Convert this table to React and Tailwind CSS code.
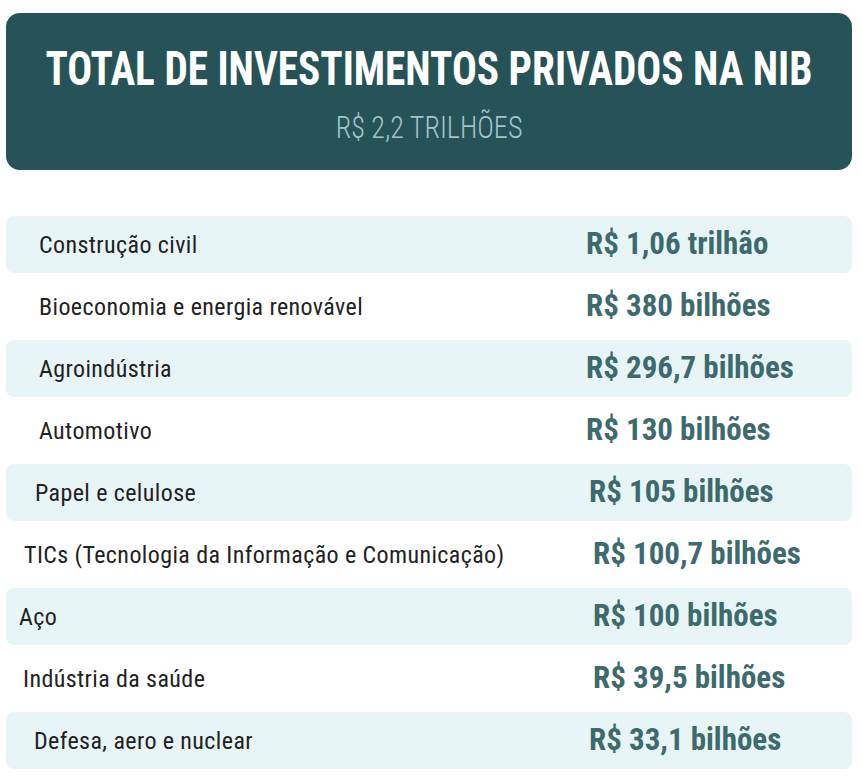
export default function App() {
  const rows = [
    { label: "Construção civil", value: "R$ 1,06 trilhão", pl: "pl-[33px]", vl: "pl-[0px]", shade: true },
    { label: "Bioeconomia e energia renovável", value: "R$ 380 bilhões", pl: "pl-[33px]", vl: "pl-[0px]" },
    { label: "Agroindústria", value: "R$ 296,7 bilhões", pl: "pl-[33px]", vl: "pl-[0px]", shade: true },
    { label: "Automotivo", value: "R$ 130 bilhões", pl: "pl-[33px]", vl: "pl-[0px]" },
    { label: "Papel e celulose", value: "R$ 105 bilhões", pl: "pl-[29px]", vl: "pl-[3px]", shade: true },
    { label: "TICs (Tecnologia da Informação e Comunicação)", value: "R$ 100,7 bilhões", pl: "pl-[18px]", vl: "pl-[7px]" },
    { label: "Aço", value: "R$ 100 bilhões", pl: "pl-[13px]", vl: "pl-[7px]", shade: true },
    { label: "Indústria da saúde", value: "R$ 39,5 bilhões", pl: "pl-[17px]", vl: "pl-[7px]" },
    { label: "Defesa, aero e nuclear", value: "R$ 33,1 bilhões", pl: "pl-[28px]", vl: "pl-[3px]", shade: true },
  ];

  const font = { fontFamily: '"Roboto Condensed", "Liberation Sans Narrow", "DejaVu Sans Condensed", sans-serif' };

  return (
    <div className="w-[862px] h-[777px] bg-white pl-[6px] pr-[10px] pt-[13px]" style={font}>
      {/* Header */}
      <div className="h-[157px] rounded-[14px] bg-[#265357] flex flex-col items-center pt-[32px]">
        <h1 className="text-white font-bold text-[48px] leading-none whitespace-nowrap scale-x-[0.86]">
          TOTAL DE INVESTIMENTOS PRIVADOS NA NIB
        </h1>
        <p className="text-[#a5c3c7] font-light text-[32px] leading-none mt-[18px] whitespace-nowrap scale-x-[0.88]">
          R$ 2,2 TRILHÕES
        </p>
      </div>

      {/* Sectors */}
      <div className="flex flex-col gap-[5px] mt-[46px]">
        {rows.map((r) => (
          <div
            key={r.label}
            className={`h-[57px] rounded-[8px] flex items-center ${r.shade ? "bg-[#e8f5f7]" : ""}`}
          >
            <div className={`w-[580px] text-[24px] tracking-[0.4px] text-[#222222] ${r.pl}`}>{r.label}</div>
            <div className={`text-[31px] font-bold text-[#3d6b6d] ${r.vl}`}>{r.value}</div>
          </div>
        ))}
      </div>
    </div>
  );
}
